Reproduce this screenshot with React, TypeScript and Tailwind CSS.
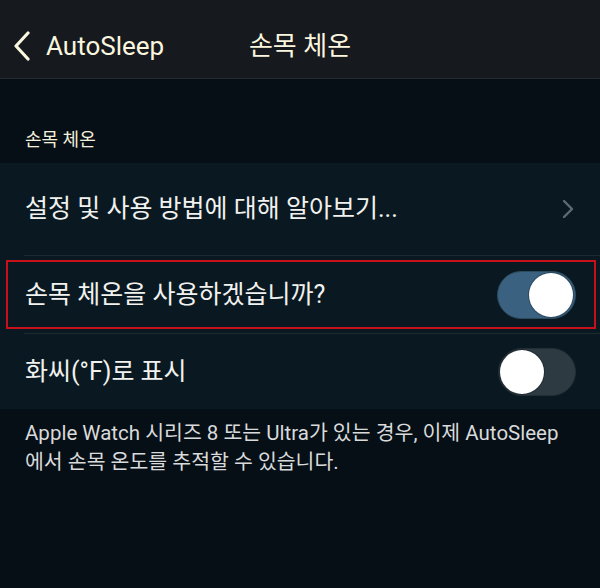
import type { ReactNode } from "react";

const FONT = { fontFamily: 'Roboto, "Noto Sans CJK KR", sans-serif' };

function Toggle({ on }: { on: boolean }) {
  return (
    <div
      className={
        on
          ? "flex h-[48px] w-[79px] items-center justify-end rounded-full border border-[#2c4a5e] bg-[#3a6180] px-[2px]"
          : "flex h-[48px] w-[78px] items-center justify-start rounded-full border border-[#222e36] bg-[#2e3a42] px-[1px]"
      }
    >
      <div className="h-[44px] w-[44px] rounded-full bg-white shadow-[0_0_0_1px_rgba(0,0,0,0.25)]" />
    </div>
  );
}

function Row({ children, right, h }: { children: ReactNode; right: ReactNode; h: string }) {
  return (
    <div className={`flex items-center pr-[24px] pl-[25px] ${h}`}>
      <span className="flex-1 text-[25px] text-[#f1f1ef]">{children}</span>
      {right}
    </div>
  );
}

export default function App() {
  return (
    <div className="flex h-[588px] w-[600px] flex-col bg-[#060f16]" style={FONT}>
      <header className="relative flex h-[79px] items-center border-b border-[#262c31] bg-[#161a1e] pt-[14px] pl-[13px]">
        <svg width="18" height="30" viewBox="0 0 18 30" fill="none">
          <path d="M15 2 L3 15 L15 28" stroke="#fbf6df" strokeWidth="3.2" strokeLinecap="round" strokeLinejoin="round" />
        </svg>
        <span className="ml-[15px] text-[26px] text-[#fbf6df]">AutoSleep</span>
        <span className="absolute left-0 right-0 top-[14px] bottom-0 flex items-center justify-center text-[26px] text-[#fbf6df]">
          손목 체온
        </span>
      </header>

      <div className="pt-[49px] pb-[11px] pl-[25px] text-[18px] leading-[24px] text-[#f4f0dc]">손목 체온</div>

      <div className="bg-[#0a1921]">
        <Row
          h="h-[92px]"
          right={
            <svg width="12" height="20" viewBox="0 0 12 20" fill="none" className="mr-[2px]">
              <path d="M2 2 L10 10 L2 18" stroke="#5f6b73" strokeWidth="2.4" strokeLinecap="round" strokeLinejoin="round" />
            </svg>
          }
        >
          설정 및 사용 방법에 대해 알아보기...
        </Row>
        <div className="ml-[24px] h-px bg-[#1c2a32]" />
        <div className="py-[4px] pr-[4px] pl-[6px]">
          <div className="flex h-[69px] items-center border-2 border-[#c8101a] pr-[18px] pl-[17px]">
            <span className="flex-1 text-[25px] text-[#f1f1ef]">손목 체온을 사용하겠습니까?</span>
            <Toggle on />
          </div>
        </div>
        <div className="ml-[24px] h-px bg-[#1c2a32]" />
        <Row h="h-[75px]" right={<Toggle on={false} />}>
          화씨(°F)로 표시
        </Row>
      </div>

      <p className="px-[25px] pt-[10px] text-[20.5px] leading-[29px] text-[#d9dadb]">
        Apple Watch 시리즈 8 또는 Ultra가 있는 경우, 이제 AutoSleep
        <br />
        에서 손목 온도를 추적할 수 있습니다.
      </p>
    </div>
  );
}
